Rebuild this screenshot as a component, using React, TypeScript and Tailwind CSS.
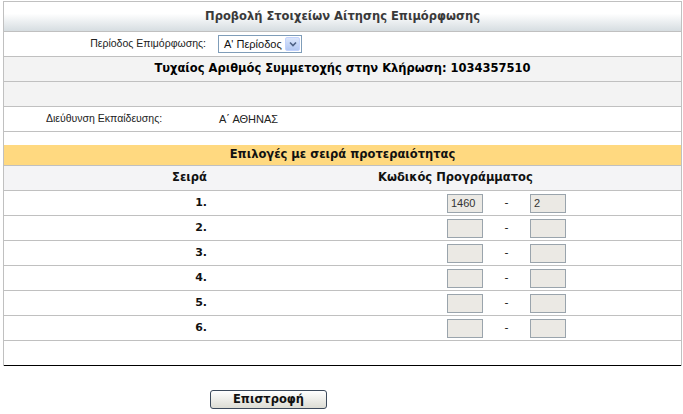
import React from 'react';

const font = { fontFamily: '"Liberation Sans", Arial, sans-serif' };
const boldFont = { fontFamily: '"DejaVu Sans", Verdana, sans-serif' };

function Field({ value }: { value?: string }) {
  return (
    <div className="w-[36px] h-[19px] bg-[#ebe9e4] border border-[#9aa4ac] text-[11px] font-normal leading-[17px] pl-[3px] text-[#333]" style={font}>
      {value}
    </div>
  );
}

export default function App() {
  const rows = [
    { n: '1.', a: '1460', b: '2' },
    { n: '2.' },
    { n: '3.' },
    { n: '4.' },
    { n: '5.' },
    { n: '6.' },
  ];

  return (
    <div className="w-[683px] h-[414px] bg-white overflow-hidden text-[#111]" style={font}>
      <div className="mt-[1px] ml-[3px] w-[679px] border-t border-l border-r border-[#c0c0c0]">
        {/* title bar */}
        <div className="h-[30px] border-b border-[#c0c0c0] bg-gradient-to-b from-white from-40% to-[#d6dde1] flex items-center justify-center">
          <span className="text-[11.5px] font-bold text-[#3a3a3a]" style={boldFont}>Προβολή Στοιχείων Αίτησης Επιμόρφωσης</span>
        </div>

        {/* period */}
        <div className="h-[25px] border-b border-[#c0c0c0] flex items-center">
          <span className="w-[202px] text-right text-[10.5px] text-[#222]">Περίοδος Επιμόρφωσης:</span>
          <div className="ml-[12px] w-[84px] h-[18px] border border-[#7f9db9] bg-white flex items-center">
            <span className="flex-1 pl-[5px] text-[11px] text-[#111]">Α' Περίοδος</span>
            <div className="w-[15px] h-[14px] mr-[1px] rounded-[2px] bg-gradient-to-b from-[#dbe6fb] to-[#b3c8f3] border border-[#c3d3fd] flex items-center justify-center">
              <svg width="8" height="6" viewBox="0 0 8 6">
                <path d="M1 1.5 L4 4.5 L7 1.5" fill="none" stroke="#4d6185" strokeWidth="1.6" />
              </svg>
            </div>
          </div>
        </div>

        {/* lottery number */}
        <div className="h-[25px] border-b border-[#c0c0c0] bg-[#f3f3f3] flex items-center justify-center">
          <span className="text-[11.5px] font-bold text-black" style={boldFont}>Τυχαίος Αριθμός Συμμετοχής στην Κλήρωση: 1034357510</span>
        </div>

        <div className="h-[25px] border-b border-[#c0c0c0] bg-[#f3f3f3]" />

        {/* directorate */}
        <div className="h-[25px] border-b border-[#c0c0c0] flex items-center text-[10.5px] text-[#222]">
          <span className="ml-[42px] w-[173px]">Διεύθυνση Εκπαίδευσης:</span>
          <span className="text-[11px]">Α΄ ΑΘΗΝΑΣ</span>
        </div>

        <div className="h-[13px]" />

        {/* choices header */}
        <div className="h-[21px] border-b border-[#c0c0c0] bg-[#ffd980] flex items-center justify-center">
          <span className="text-[11.5px] font-bold text-[#111]" style={boldFont}>Επιλογές με σειρά προτεραιότητας</span>
        </div>

        <div className="h-[25px] border-b border-[#c0c0c0] bg-[#f4f4f6] flex items-center text-[11.5px] font-bold text-[#111] whitespace-nowrap" style={boldFont}>
          <span className="w-[374px] text-center pr-[3px]">Σειρά</span>
          <span className="w-[152px] text-center">Κωδικός Προγράμματος</span>
        </div>

        {rows.map((r) => (
          <div key={r.n} className="h-[25px] border-b border-[#c0c0c0] flex items-center text-[11px] font-bold" style={boldFont}>
            <span className="w-[203px] text-right">{r.n}</span>
            <div className="ml-[240px] flex items-center">
              <Field value={r.a} />
              <span className="w-[47px] text-center font-normal text-[11px]">-</span>
              <Field value={r.b} />
            </div>
          </div>
        ))}

        <div className="h-[25px] border-b border-black" />
      </div>

      <div className="mt-[20px] ml-[210px]">
        <button className="w-[117px] h-[19px] rounded-[3px] border border-[#3c4a5c] bg-gradient-to-b from-white to-[#dcdcd4] text-[11.5px] font-bold text-[#111] leading-[16px]" style={boldFont}>
          Επιστροφή
        </button>
      </div>
    </div>
  );
}
